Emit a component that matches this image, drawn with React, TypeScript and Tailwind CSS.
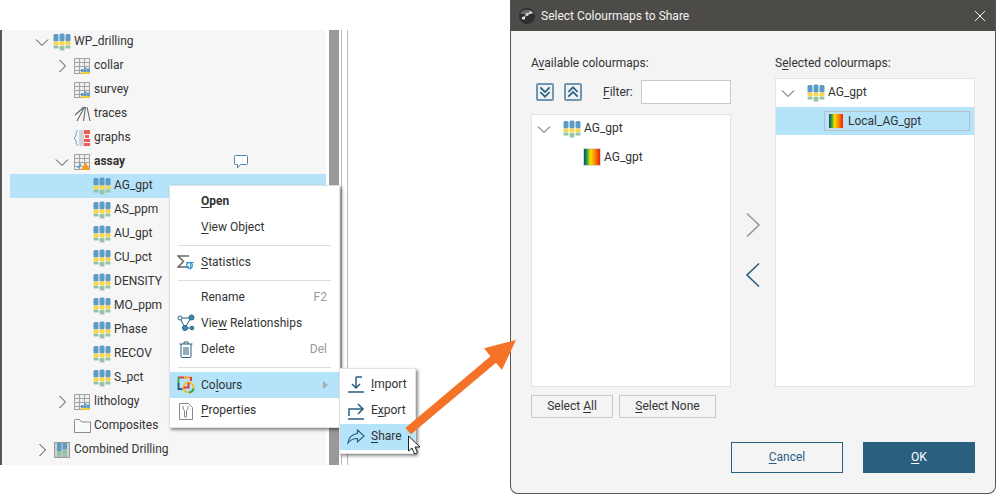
import type { ReactNode } from "react";

const BLUE = "#2a5f80";

function Key({ children }: { children: ReactNode }) {
  return <span className="underline underline-offset-2">{children}</span>;
}

function Chevron({ open }: { open?: boolean }) {
  return (
    <svg width="14" height="14" viewBox="0 0 14 14" fill="none" stroke="#444" strokeWidth="1">
      {open ? <path d="M1 4.500 7 10.500l6-6" /> : <path d="M4.500 1 10.500 7l-6 6" />}
    </svg>
  );
}

// the blue / yellow / green columns used for drillhole tables and columns
function DrillIcon() {
  return (
    <svg width="18" height="18" viewBox="0 0 18 18">
      {[0.5, 6.5, 12.5].map((x, i) => {
        const mid = i === 1;
        return (
          <g key={x}>
            <rect x={x} y={mid ? 0.5 : 1} width="5" height={mid ? 8 : 7.500} rx="1.5" fill="#5b9bc6" />
            <rect x={x} y="8.500" width="5" height={mid ? 4 : 3.500} fill="#f9d84f" />
            <rect x={x} y={mid ? 13 : 12.500} width="5" height={mid ? 4.500 : 3} rx="1" fill="#94c3a6" />
          </g>
        );
      })}
    </svg>
  );
}

function TableIcon({ warn }: { warn?: boolean }) {
  return (
    <svg width="16" height="16" viewBox="0 0 16 16">
      <rect x="0.500" y="0.500" width="15" height="15" fill="#efefef" stroke="#a3a3a3" />
      <path d="M0 4.500h16M0 8.500h16M0 12.500h16M5.500 0v16M10.500 0v16" stroke="#a3a3a3" />
      {warn ? (
        <g>
          <path d="M7 16l4.500-8 4.500 8z" fill="#f59a23" />
          <path d="M4 14l3-4" stroke="#5b9bc6" strokeWidth="1.500" />
        </g>
      ) : (
        <g>
          <rect x="7" y="11" width="2.500" height="4" fill="#5b9bc6" />
          <rect x="10" y="9.500" width="2.500" height="5" fill="#5b9bc6" />
          <rect x="13" y="10.500" width="2.500" height="4" fill="#5b9bc6" />
          <rect x="7" y="14" width="8.500" height="2" fill="#f0cf3c" />
        </g>
      )}
    </svg>
  );
}

function TracesIcon() {
  return (
    <svg width="17" height="16" viewBox="0 0 17 16" fill="none" stroke="#666" strokeWidth="1.100">
      <path d="M10 1 1 9M10.500 1 3 15M11.500 1 9.500 15M13 1l3 14" />
    </svg>
  );
}

function GraphsIcon() {
  return (
    <svg width="18" height="18" viewBox="0 0 18 18">
      <path d="M5 1.500C2 2 4.500 7 1 9c3.500 2 1 7 4 7.500" fill="none" stroke="#5b9bc6" />
      <rect x="6" y="1" width="5" height="16" rx="1.500" fill="#d2d2d2" />
      <rect x="11" y="1" width="6" height="4" fill="#ec5b5b" />
      <rect x="12" y="6" width="4" height="3" fill="#ec5b5b" />
      <rect x="11" y="10" width="6" height="3" fill="#ec5b5b" />
      <rect x="11" y="14" width="6" height="3" fill="#ec5b5b" />
    </svg>
  );
}

function FolderIcon() {
  return (
    <svg width="17" height="14" viewBox="0 0 17 14" fill="#fafafa" stroke="#8c8c8c">
      <path d="M.5 1.500a1 1 0 0 1 1-1h4l2 2.500h9v10.500H.5z" />
    </svg>
  );
}

function CombinedIcon() {
  return (
    <svg width="16" height="16" viewBox="0 0 16 16">
      <rect x="0.500" y="0.500" width="15" height="15" fill="#d2d2d2" stroke="#999" />
      <rect x="3" y="1" width="4.500" height="8" fill="#5b9bc6" />
      <rect x="8.500" y="1" width="4.500" height="6" fill="#5b9bc6" />
      <rect x="3" y="9" width="4.500" height="6" fill="#94c3a6" />
      <rect x="8.500" y="7" width="4.500" height="8" fill="#94c3a6" />
    </svg>
  );
}

function BubbleIcon() {
  return (
    <svg width="14" height="14" viewBox="0 0 14 14" fill="#fff" stroke="#4f84a6" strokeWidth="1">
      <path d="M1.500.5h11a1 1 0 0 1 1 1v7a1 1 0 0 1-1 1H6.500L3.500 13V9.500h-2a1 1 0 0 1-1-1v-7a1 1 0 0 1 1-1z" />
    </svg>
  );
}

function Gradient({ className }: { className: string }) {
  return (
    <div className={`shrink-0 border border-[#d8d8d8] bg-[linear-gradient(to_right,#1a3f9c,#1f9a3c_16%,#f5e000_40%,#f78a00_68%,#e8200f)] ${className}`} />
  );
}

type Row = { label: string; level: 0 | 1 | 2; icon: ReactNode; chevron?: "open" | "closed"; bold?: boolean; selected?: boolean; note?: boolean };

const rows: Row[] = [
  { label: "WP_drilling", level: 0, icon: <DrillIcon />, chevron: "open" },
  { label: "collar", level: 1, icon: <TableIcon />, chevron: "closed" },
  { label: "survey", level: 1, icon: <TableIcon /> },
  { label: "traces", level: 1, icon: <TracesIcon /> },
  { label: "graphs", level: 1, icon: <GraphsIcon /> },
  { label: "assay", level: 1, icon: <TableIcon warn />, chevron: "open", bold: true, note: true },
  { label: "AG_gpt", level: 2, icon: <DrillIcon />, selected: true },
  { label: "AS_ppm", level: 2, icon: <DrillIcon /> },
  { label: "AU_gpt", level: 2, icon: <DrillIcon /> },
  { label: "CU_pct", level: 2, icon: <DrillIcon /> },
  { label: "DENSITY", level: 2, icon: <DrillIcon /> },
  { label: "MO_ppm", level: 2, icon: <DrillIcon /> },
  { label: "Phase", level: 2, icon: <DrillIcon /> },
  { label: "RECOV", level: 2, icon: <DrillIcon /> },
  { label: "S_pct", level: 2, icon: <DrillIcon /> },
  { label: "lithology", level: 1, icon: <TableIcon />, chevron: "closed" },
  { label: "Composites", level: 1, icon: <FolderIcon /> },
  { label: "Combined Drilling", level: 0, icon: <CombinedIcon />, chevron: "closed" },
];

const indent = { 0: "pl-[22px]", 1: "pl-[42px]", 2: "pl-[62px]" };

function TreeRow({ row }: { row: Row }) {
  return (
    <div className={`flex h-6 items-center ${indent[row.level]} ${row.selected ? "bg-[#b5e3fa]" : ""} ${row.bold ? "font-bold" : ""}`}>
      <span className="flex w-5 justify-center">
        {row.chevron && <Chevron open={row.chevron === "open"} />}
      </span>
      <span className="flex w-5 justify-center">{row.icon}</span>
      <span className="mb-[2px] ml-0.5">{row.label}</span>
      {row.note && (
        <span className="ml-auto mr-[78px]">
          <BubbleIcon />
        </span>
      )}
    </div>
  );
}

function MenuItem({ icon, children, hint, active, bold, arrow }: { icon?: ReactNode; children: ReactNode; hint?: string; active?: boolean; bold?: boolean; arrow?: boolean }) {
  return (
    <div className={`flex h-[26px] items-center ${active ? "bg-[#b5e3fa]" : ""} ${bold ? "font-bold" : ""}`}>
      <span className="flex w-[31px] justify-center pl-px">{icon}</span>
      <span>{children}</span>
      {hint && <span className="ml-auto mr-[12px] text-[#999]">{hint}</span>}
      {arrow && <span className="ml-auto mr-[11px] h-0 w-0 border-y-[4px] border-l-[5px] border-y-transparent border-l-[#aaa]" />}
    </div>
  );
}

function Separator({ className = "mt-[5px] mb-[3px]" }: { className?: string }) {
  return <div className={`mx-2 h-px bg-[#dcdcdc] ${className}`} />;
}

function ContextMenu() {
  return (
    <div className="absolute left-[169px] top-[185px] w-[171px] border border-[#e2e2e2] bg-white pt-[2px] pb-[3px] shadow-[2px_2px_3px_rgba(0,0,0,0.45)]">
      <MenuItem bold><Key>O</Key>pen</MenuItem>
      <MenuItem><Key>V</Key>iew Object</MenuItem>
      <Separator />
      <MenuItem
        icon={
          <svg width="18" height="17" viewBox="0 0 18 17" fill="none">
            <path d="M12 2H1l5.500 5.500L1 13h11" stroke="#666" strokeWidth="1.500" />
            <circle cx="12.500" cy="11.500" r="2.800" stroke="#3a9ccc" strokeWidth="1.300" />
            <path d="M9 8.500h8M13.500 8.500v7" stroke="#3a9ccc" />
          </svg>
        }
      >
        <Key>S</Key>tatistics
      </MenuItem>
      <Separator />
      <MenuItem hint="F2">Rename</MenuItem>
      <MenuItem
        icon={
          <svg width="18" height="18" viewBox="0 0 18 18" fill="#3a8fb8" stroke={BLUE}>
            <path d="M3 4 8 14M4 4h10M9 14h6M14 4 9 12" fill="none" />
            <circle cx="3" cy="4" r="2" fill="#fff" />
            <circle cx="14.500" cy="3.500" r="2.500" />
            <circle cx="8" cy="14" r="2.500" />
            <circle cx="15" cy="14" r="1.800" />
          </svg>
        }
      >
        Vie<Key>w</Key> Relationships
      </MenuItem>
      <MenuItem
        hint="Del"
        icon={
          <svg width="14" height="17" viewBox="0 0 14 17" fill="none" stroke={BLUE}>
            <path d="M.5 3h13M5 3V1h4v2M2 3v12.500a1 1 0 0 0 1 1h8a1 1 0 0 0 1-1V3M5 6v8M7 6v8M9 6v8" />
          </svg>
        }
      >
        Delete
      </MenuItem>
      <Separator className="mt-[5px] mb-[4px]" />
      <MenuItem
        active
        arrow
        icon={
          <svg width="18" height="18" viewBox="0 0 18 18" fill="none">
            <path d="M1 1.500h6" stroke="#e6393a" strokeWidth="2" />
            <path d="M7 1.500h7" stroke="#f4a11f" strokeWidth="2" />
            <path d="M1.500 1v6" stroke="#3aa655" strokeWidth="2" />
            <path d="M1.500 7v6h4" stroke={BLUE} strokeWidth="2" />
            <path d="M14 1v4" stroke="#e6393a" strokeWidth="2" />
            <circle cx="11.500" cy="11.500" r="5" stroke="#f4c11f" strokeWidth="2" />
            <path d="M11.500 6.500v5h-5" stroke="#e6393a" strokeWidth="2" />
            <path d="M12 16.500a5 5 0 0 0 4.500-4" stroke="#3aa655" strokeWidth="2" />
          </svg>
        }
      >
        Co<Key>l</Key>ours
      </MenuItem>
      <MenuItem
        icon={
          <svg width="14" height="17" viewBox="0 0 14 17" fill="#fff" stroke="#888">
            <path d="M.5.5h9l4 4v12H.5z" />
            <path d="M4 3v3l1.500 1.500V14h2V7.500L9 6V3" />
          </svg>
        }
      >
        <span className="mb-[2px] block"><Key>P</Key>roperties</span>
      </MenuItem>
    </div>
  );
}

function ShareMenu() {
  return (
    <div className="absolute left-[339px] top-[368px] w-[77px] border border-[#e2e2e2] bg-white py-[3px] shadow-[2px_2px_3px_rgba(0,0,0,0.45)]">
      {[
        {
          label: <><Key>I</Key>mport</>,
          d: "M1 16h16M9 1v11M5 8l4 4 4-4M9 1h6",
        },
        {
          label: <>E<Key>x</Key>port</>,
          d: "M1 17h16M2 14V7h14M11 2l5 5-5 5",
        },
      ].map((item, i) => (
        <div key={i} className="flex h-[26px] items-center">
          <span className="flex w-[31px] justify-center">
            <svg width="18" height="18" viewBox="0 0 18 18" fill="none" stroke={BLUE} strokeWidth="1.500">
              <path d={item.d} />
            </svg>
          </span>
          <span className="mb-[2px]">{item.label}</span>
        </div>
      ))}
      <div className="flex h-[26px] items-center bg-[#b5e3fa]">
        <span className="flex w-[31px] justify-center">
          <svg width="18" height="16" viewBox="0 0 18 16" fill="none" stroke={BLUE} strokeWidth="1.200">
            <path d="M10.500 1 17 7l-6.500 6V9.500C6 9.500 3 11 1 14c0-5 4-9 9.500-9.500z" />
          </svg>
        </span>
        <span className="mb-[2px]"><Key>S</Key>hare</span>
      </div>
    </div>
  );
}

function ExpandButton({ d }: { d: string }) {
  return (
    <div className="flex h-[18px] w-[18px] items-center justify-center rounded-[2px] border-2 border-[#7197b0] bg-[#eef2f5]">
      <svg width="14" height="14" viewBox="0 0 12 12" fill="none" stroke={BLUE} strokeWidth="1.500">
        <path d={d} />
      </svg>
    </div>
  );
}

function DialogButton({ className, children }: { className: string; children: ReactNode }) {
  return <div className={`flex items-center justify-center pb-[2px] ${className}`}><span>{children}</span></div>;
}

function Dialog() {
  return (
    <div className="ml-auto flex h-[494px] w-[486px] flex-col overflow-hidden rounded-b-[8px] border-x border-b border-[#555] bg-[#f4f4f4]">
      <div className="flex h-[31px] shrink-0 items-center bg-[#4d4b48] pl-2 pr-[9px] text-[#f2f2f2]">
        <svg width="16" height="16" viewBox="0 0 16 16">
          <circle cx="8" cy="8" r="8" fill="#2f2f2f" />
          <path d="M1 6a8 8 0 0 1 14 0z" fill="#6a6a6a" />
          <circle cx="4.500" cy="10" r="1.600" fill="#eee" />
          <circle cx="8" cy="6.500" r="1.600" fill="#eee" />
          <circle cx="11.500" cy="4.500" r="1.200" fill="#eee" />
          <path d="M4.500 10 8 6.500l3.500-2" stroke="#eee" />
        </svg>
        <span className="ml-[6px]">Select Colourmaps to Share</span>
        <svg className="ml-auto" width="12" height="12" viewBox="0 0 12 12" stroke="#f2f2f2" strokeWidth="1">
          <path d="M1 1l10 10M11 1 1 11" />
        </svg>
      </div>

      <div className="flex flex-1 flex-col px-5 pt-[24px]">
        <div className="flex">
          <div className="flex w-[200px] flex-col">
            <div className="h-[16px] leading-[16px]">A<Key>v</Key>ailable colourmaps:</div>
            <div className="mt-[9px] flex h-[24px] items-center pl-[5px]">
              <ExpandButton d="M2 2l4 4 4-4M2 6l4 4 4-4" />
              <span className="ml-[10px]"><ExpandButton d="M2 6l4-4 4 4M2 10l4-4 4 4" /></span>
              <span className="ml-[21px]"><Key>F</Key>ilter:</span>
              <div className="ml-auto h-[24px] w-[90px] border border-[#c9c9c9] bg-white" />
            </div>
            <div className="mt-[10px] h-[273px] border border-[#e4e4e4] bg-white">
              <div className="flex h-[27px] items-center pl-[2px]">
                <span className="flex w-5 justify-center"><Chevron open /></span>
                <span className="ml-[9px] flex"><DrillIcon /></span>
                <span className="ml-[3px] mb-[2px]">AG_gpt</span>
              </div>
              <div className="mt-px flex h-[28px] items-center pl-[51px]">
                <Gradient className="h-[18px] w-[18px]" />
                <span className="ml-[3px]">AG_gpt</span>
              </div>
            </div>
          </div>

          <div className="flex w-[44px] flex-col items-center pt-[157px]">
            <svg width="16" height="26" viewBox="0 0 16 26" fill="none" stroke="#9a9a9a" strokeWidth="1.600">
              <path d="M2 1.500 14 13 2 24.500" />
            </svg>
            <svg className="mt-6" width="16" height="26" viewBox="0 0 16 26" fill="none" stroke={BLUE} strokeWidth="1.600">
              <path d="M14 1.500 2 13l12 11.500" />
            </svg>
          </div>

          <div className="flex w-[200px] flex-col">
            <div className="h-[16px] leading-[16px]">S<Key>e</Key>lected colourmaps:</div>
            <div className="mt-[7px] h-[309px] border border-[#e4e4e4] bg-white">
              <div className="flex h-[28px] items-center pl-[2px]">
                <span className="flex w-5 justify-center"><Chevron open /></span>
                <span className="ml-[9px] flex"><DrillIcon /></span>
                <span className="ml-[3px] mb-[2px]">AG_gpt</span>
              </div>
              <div className="flex h-[28px] items-center bg-[#b5e3fa] pl-[48px] pr-[4px]">
                <div className="flex h-5 flex-1 items-center border border-[#b4bfc6] pl-[3px]">
                  <Gradient className="h-4 w-4" />
                  <span className="ml-1">Local_AG_gpt</span>
                </div>
              </div>
            </div>
          </div>
        </div>

        <div className="mt-[8px] flex gap-[6px]">
          <DialogButton className="h-[23px] w-[82px] border border-[#c9c9c9]">Select <Key>A</Key>ll</DialogButton>
          <DialogButton className="h-[23px] w-[97px] border border-[#c9c9c9]"><Key>S</Key>elect None</DialogButton>
        </div>

        <div className="mt-[24px] flex justify-end gap-5">
          <DialogButton className="h-[31px] w-[112px] border border-[#2a5f80] text-[#2a5f80]"><Key>C</Key>ancel</DialogButton>
          <DialogButton className="h-[31px] w-[112px] bg-[#2a5f80] text-white"><Key>O</Key>K</DialogButton>
        </div>
      </div>
    </div>
  );
}

export default function App() {
  return (
    <div className="relative flex h-[494px] w-[996px] overflow-hidden bg-white font-['Roboto',sans-serif] text-[12px] text-[#333]">
      {/* tree panel */}
      <div className="mt-[30px] flex h-[435px] w-[348px] shrink-0">
        <div className="w-[326px] border-l-2 border-[#555] bg-[#f6f6f6]">
          <div className="pl-2">
            {rows.map((row) => (
              <TreeRow key={row.label} row={row} />
            ))}
          </div>
        </div>
        <div className="ml-[3px] w-[10px] bg-[#999]" />
        <div className="ml-[2px] w-px bg-[#bbb]" />
        <div className="ml-[5px] w-px bg-[#bbb]" />
      </div>

      <Dialog />
      <ContextMenu />
      <ShareMenu />

      {/* callout arrow from Share to the dialog */}
      <svg className="absolute left-[400px] top-[335px]" width="120" height="100" viewBox="0 0 120 100" fill="#f47328">
        <path d="M5.300 93 90.500 21.300 84 13.300 116 5 102 35 96 27.800 11 99.300z" />
      </svg>

      {/* mouse pointer */}
      <svg className="absolute left-[407px] top-[435px]" width="14" height="21" viewBox="0 0 14 21" fill="#fff" stroke="#222">
        <path d="M1.500 1v15l3.500-3 2.500 6 3-1.200-2.500-5.800H13z" />
      </svg>
    </div>
  );
}
